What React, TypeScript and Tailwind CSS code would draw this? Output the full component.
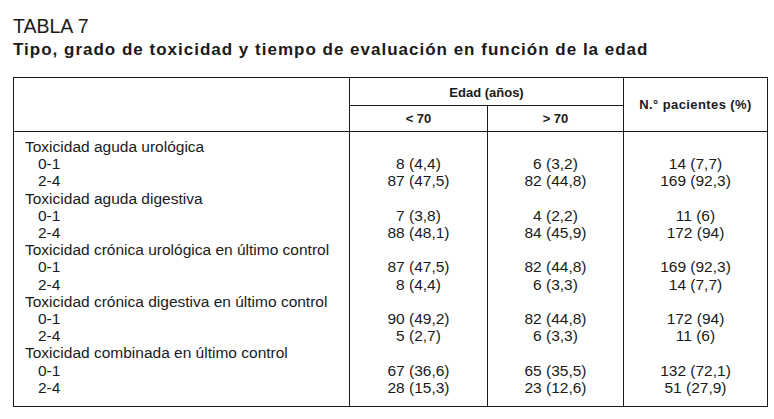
const groups = [
  {
    label: "Toxicidad aguda urológica",
    rows: [
      ["0-1", "8 (4,4)", "6 (3,2)", "14 (7,7)"],
      ["2-4", "87 (47,5)", "82 (44,8)", "169 (92,3)"],
    ],
  },
  {
    label: "Toxicidad aguda digestiva",
    rows: [
      ["0-1", "7 (3,8)", "4 (2,2)", "11 (6)"],
      ["2-4", "88 (48,1)", "84 (45,9)", "172 (94)"],
    ],
  },
  {
    label: "Toxicidad crónica urológica en último control",
    rows: [
      ["0-1", "87 (47,5)", "82 (44,8)", "169 (92,3)"],
      ["2-4", "8 (4,4)", "6 (3,3)", "14 (7,7)"],
    ],
  },
  {
    label: "Toxicidad crónica digestiva en último control",
    rows: [
      ["0-1", "90 (49,2)", "82 (44,8)", "172 (94)"],
      ["2-4", "5 (2,7)", "6 (3,3)", "11 (6)"],
    ],
  },
  {
    label: "Toxicidad combinada en último control",
    rows: [
      ["0-1", "67 (36,6)", "65 (35,5)", "132 (72,1)"],
      ["2-4", "28 (15,3)", "23 (12,6)", "51 (27,9)"],
    ],
  },
];

// one value column, blank line where the group label sits
const Column = ({ idx }: { idx: number }) => (
  <div className="flex flex-col items-center">
    {groups.map((g) => (
      <div key={g.label} className="flex flex-col items-center">
        <span>&nbsp;</span>
        {g.rows.map((r, i) => (
          <span key={i}>{r[idx]}</span>
        ))}
      </div>
    ))}
  </div>
);

export default function App() {
  return (
    <div className="w-[774px] h-[419px] bg-white text-[#1a1a1a] font-['Liberation_Sans',Arial,sans-serif] pl-[13px] pt-[14px]">
      <h2 className="text-[19.5px] leading-[24px] font-light">TABLA 7</h2>
      <h1 className="mt-[2px] text-[17px] leading-[20px] font-bold tracking-[1px]">
        Tipo, grado de toxicidad y tiempo de evaluación en función de la edad
      </h1>

      <table className="mt-[17px] table-fixed border-collapse border border-[#1a1a1a] w-[754px]">
        <colgroup>
          <col className="w-[336px]" />
          <col className="w-[138px]" />
          <col className="w-[136px]" />
          <col className="w-[144px]" />
        </colgroup>
        <thead className="text-[13px] font-bold">
          <tr className="h-[28px]">
            <th rowSpan={2} className="border border-[#1a1a1a]"></th>
            <th colSpan={2} className="border border-[#1a1a1a] font-bold pt-[2px]">
              Edad (años)
            </th>
            <th rowSpan={2} className="border border-[#1a1a1a] font-bold tracking-[0.4px]">
              N.° pacientes (%)
            </th>
          </tr>
          <tr className="h-[26px]">
            <th className="border border-[#1a1a1a] font-bold">&lt; 70</th>
            <th className="border border-[#1a1a1a] font-bold">&gt; 70</th>
          </tr>
        </thead>
        <tbody className="text-[15.5px] leading-[17.2px] align-top">
          <tr>
            <td className="border-r border-[#1a1a1a] pl-[11px] pt-[6px] pb-[10px]">
              {groups.map((g) => (
                <div key={g.label} className="flex flex-col">
                  <span>{g.label}</span>
                  {g.rows.map((r, i) => (
                    <span key={i} className="pl-[13px]">
                      {r[0]}
                    </span>
                  ))}
                </div>
              ))}
            </td>
            <td className="border-r border-[#1a1a1a] pt-[6px]">
              <Column idx={1} />
            </td>
            <td className="border-r border-[#1a1a1a] pt-[6px]">
              <Column idx={2} />
            </td>
            <td className="pt-[6px]">
              <Column idx={3} />
            </td>
          </tr>
        </tbody>
      </table>
    </div>
  );
}
